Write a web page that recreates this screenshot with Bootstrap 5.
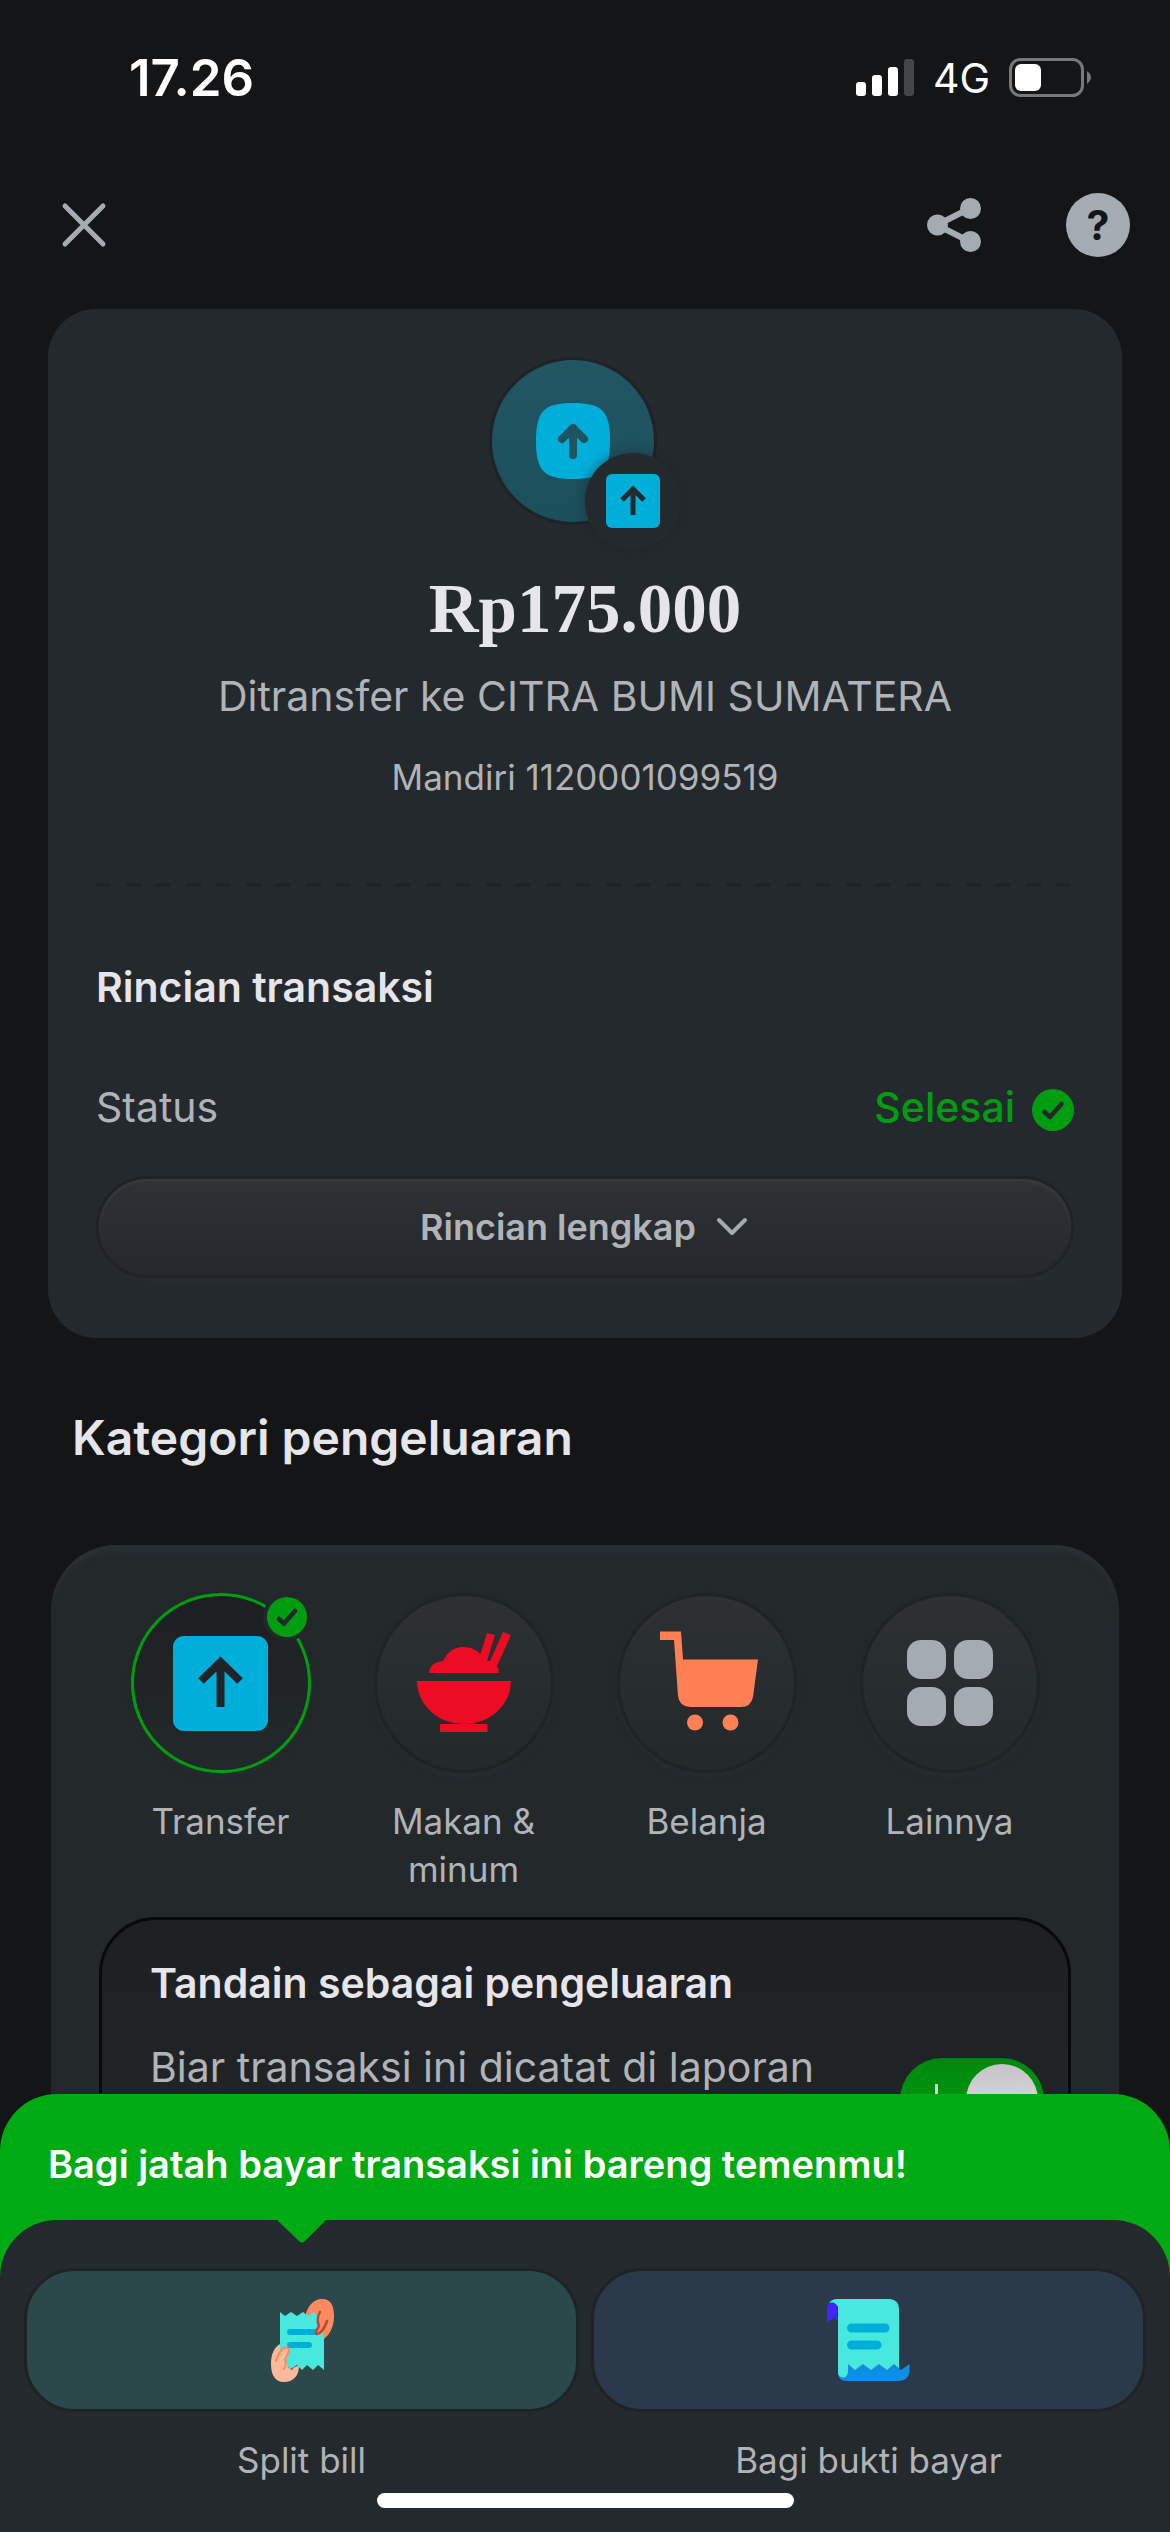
<!DOCTYPE html>
<html lang="id" data-bs-theme="dark">
<head>
<meta charset="utf-8">
<meta name="viewport" content="width=device-width, initial-scale=1">
<title>Rincian transaksi</title>
<link href="https://cdn.jsdelivr.net/npm/bootstrap@5.3.0/dist/css/bootstrap.min.css" rel="stylesheet">
<style>
  :root {
    --page: #131517; --panel: #24292d; --line: #1f2326;
    --bright: #e5e5ea; --soft: #b0b3b7; --steel: #a4abb3;
    --green: #009d10; --cyan: #00aeda;
  }
  body { background: var(--page); color: var(--soft); font-family: Inter, "Liberation Sans", sans-serif; line-height: 60px; font-size: 41px; }
  svg { display: block; flex: none; }
  button { background: none; border: 0; color: inherit; }
  h1, h2, p { margin: 0; line-height: 60px; }

  .statusbar { height: 156px; padding: 0 79px 0 129px; color: #fff; }
  .signals { gap: 19px; }
  .clock { font-size: 51px; font-weight: 600; }
  .topbar { height: 138px; padding: 0 40px 0 54px; }
  .topbar .actions { gap: 85px; }
  .help { width: 64px; height: 64px; border-radius: 50%; background: var(--steel); color: var(--page); font-size: 41px; font-weight: 700; line-height: 64px; }

  .receipt { background: var(--panel); border-radius: 48px; margin: 15px 48px 0; padding: 48px 48px 60px; }
  .avatar { width: 168px; height: 168px; margin-right: 24px; border: 3px solid var(--line); border-radius: 50%; background: linear-gradient(#225664, #1c4f5c); }
  .avatar-tag { position: absolute; right: -27px; bottom: -27px; width: 96px; height: 96px; border-radius: 50%; background: var(--panel); box-shadow: 0 0 12px rgba(32,34,38,.6); }
  .amount { font-family: "Liberation Serif", serif; font-weight: 700; font-size: 69px; line-height: 84px; color: var(--bright); margin-top: 42px; }
  .payee { margin-top: 15px; }
  .account { font-size: 35px; line-height: 48px; margin-top: 27px; }
  .dashes { height: 4px; margin: 82px 0 70px; background: repeating-linear-gradient(90deg, var(--line) 0 15px, transparent 15px 30px); }
  .section-title { font-size: 41px; font-weight: 600; color: var(--bright); }
  .state-row { margin-top: 60px; }
  .state { color: var(--green); font-weight: 500; gap: 17px; }
  .more { height: 102px; margin-top: 39px; border: 3px solid var(--line); border-radius: 51px; background: linear-gradient(#2e3235, #25292d); box-shadow: inset 0 3px 3px #383b3e, 0 6px 6px #272b2f; font-size: 36px; font-weight: 600; gap: 18px; }

  .category-title { font-size: 48px; font-weight: 600; color: var(--bright); margin: 70px 72px 0; }
  .categories { background: #23282b; border-radius: 66px 66px 0 0; margin: 77px 51px 0; padding: 48px; box-shadow: inset 0 9px 6px -3px #2b3033; }
  .cat { font-size: 35px; line-height: 48px; gap: 24px; min-height: 300px; }
  .disc { width: 180px; height: 180px; border-radius: 50%; border: 3px solid var(--line); background: linear-gradient(#2d3134, #23282b); box-shadow: 0 4px 6px #272b2e; }
  .disc.on { border-color: var(--green); background: linear-gradient(#1d2023, #23282b); }
  .disc-check { position: absolute; right: -3px; top: -3px; }
  .record { min-height: 366px; margin-top: 24px; padding: 33px 24px 33px 48px; border: 3px solid #08090a; border-radius: 57px; background: linear-gradient(#1d2023, #23282b); }
  .record p { margin-top: 24px; }
  .toggle.form-check-input { width: 144px; height: 84px; margin: 0; border: 0; border-radius: 42px; box-shadow: none; background: linear-gradient(#00880e, #009d10); }
  .toggle-box::before { content: ""; position: absolute; left: 35px; top: 26px; width: 3px; height: 30px; background: #d4d4d6; }
  .toggle-box::after { content: ""; position: absolute; right: 6px; top: 6px; width: 72px; height: 72px; border-radius: 50%; background: linear-gradient(#c4c4c8, #e5e5ea); }

  .sheet { background: #00aa13; border-radius: 57px 57px 0 0; }
  .promo { padding: 40px 48px 26px; font-size: 38px; font-weight: 600; color: #fff; }
  .sheet-body { background: var(--panel); border-radius: 57px 57px 0 0; padding: 48px 24px 24px; }
  .tiles { gap: 12px; }
  .action { color: var(--soft); font-size: 35px; line-height: 48px; gap: 24px; }
  .tile { height: 144px; border: 3px solid var(--line); border-radius: 51px; background: #2b484b; }
  .tile.blue { background: #2a3a4a; }
  .pointer { position: absolute; top: -49px; left: 50%; margin-left: -24px; }
  .home { width: 417px; height: 15px; border-radius: 8px; background: #fff; margin: 9px auto 0; }
</style>
</head>
<body>
<div class="statusbar d-flex align-items-center justify-content-between">
  <span class="clock">17.26</span>
  <div class="signals d-flex align-items-center">
    <svg width="58" height="38" viewBox="0 0 58 38" fill="#fff"><rect y="23" width="10" height="14" rx="3"/><rect x="16" y="16" width="10" height="21" rx="3"/><rect x="32" y="8" width="10" height="29" rx="3"/><rect x="48" width="10" height="37" rx="3" fill="#454648"/></svg>
    <span>4G</span>
    <svg width="82" height="40" viewBox="0 0 82 40"><rect x="1.500" y="1.500" width="72" height="36" rx="10" fill="none" stroke="#77787a" stroke-width="3"/><rect x="6" y="6" width="26" height="27" rx="6" fill="#fff"/><path d="M78 13q8 6 0 13z" fill="#77787a"/></svg>
  </div>
</div>

<header class="topbar d-flex align-items-center justify-content-between">
  <button class="p-0" aria-label="Tutup"><svg width="60" height="60" viewBox="0 0 60 60" stroke="#a4abb3" stroke-width="5" stroke-linecap="round"><path d="M11 11 49 49M49 11 11 49"/></svg></button>
  <div class="actions d-flex align-items-center">
    <button class="p-0" aria-label="Bagikan"><svg width="54" height="54" viewBox="0 0 54 54" fill="#a4abb3"><path d="M10 27 43.500 10M10 27 43.500 44" stroke="#a4abb3" stroke-width="6"/><circle cx="10.500" cy="27" r="10.500"/><circle cx="43.500" cy="10.500" r="10.500"/><circle cx="43.500" cy="43.500" r="10.500"/></svg></button>
    <button class="help p-0" aria-label="Bantuan">?</button>
  </div>
</header>

<main>
  <section class="receipt">
    <div class="text-center">
      <div class="avatar position-relative d-inline-flex align-items-center justify-content-center align-top">
        <svg width="74" height="76" viewBox="0 0 74 76"><path d="M37 0C66 0 74 8 74 38S66 76 37 76 0 68 0 38 8 0 37 0Z" fill="#00aeda"/><path d="M37 52V25M26 36 37 25 48 36" fill="none" stroke="#1f5361" stroke-width="8" stroke-linecap="round" stroke-linejoin="round"/></svg>
        <span class="avatar-tag d-flex align-items-center justify-content-center"><svg width="54" height="54" viewBox="0 0 54 54"><rect width="54" height="54" rx="6" fill="#00aeda"/><path d="M27 41V14M16 26 27 15 38 26" fill="none" stroke="#25292d" stroke-width="5"/></svg></span>
      </div>
      <h1 class="amount">Rp175.000</h1>
      <p class="payee">Ditransfer ke CITRA BUMI SUMATERA</p>
      <p class="account">Mandiri 1120001099519</p>
    </div>
    <div class="dashes"></div>
    <h2 class="section-title">Rincian transaksi</h2>
    <div class="state-row d-flex justify-content-between align-items-center">
      <span>Status</span>
      <span class="state d-flex align-items-center">Selesai
        <svg width="42" height="48" viewBox="0 0 42 48"><circle cx="21" cy="27" r="21" fill="#009d10"/><path d="M12.500 29 18 34 29.500 21" fill="none" stroke="#25292d" stroke-width="4.500" stroke-linecap="round" stroke-linejoin="round"/></svg>
      </span>
    </div>
    <button class="more w-100 d-flex align-items-center justify-content-center">Rincian lengkap
      <svg width="36" height="24" viewBox="0 0 36 24"><path d="M5 5 18 18 31 5" fill="none" stroke="#a4abb3" stroke-width="4" stroke-linecap="round" stroke-linejoin="round"/></svg>
    </button>
  </section>

  <h2 class="category-title">Kategori pengeluaran</h2>
  <section class="categories">
    <div class="row g-0">
      <button class="cat col-3 p-0 d-flex flex-column align-items-center">
        <span class="disc on position-relative d-flex align-items-center justify-content-center">
          <svg width="95" height="95" viewBox="0 0 95 95"><rect width="95" height="95" rx="11" fill="#00aeda"/><path d="M47.500 71V24M28 45 47.500 26 67 45" fill="none" stroke="#202427" stroke-width="8"/></svg>
          <svg class="disc-check" width="48" height="48" viewBox="0 0 48 48"><circle cx="24" cy="24" r="24" fill="#23282b"/><circle cx="24" cy="24" r="20" fill="#009d10"/><path d="M16 26 21 30.500 32 18" fill="none" stroke="#23282b" stroke-width="4.500" stroke-linecap="round" stroke-linejoin="round"/></svg>
        </span>
        <span>Transfer</span>
      </button>
      <button class="cat col-3 p-0 d-flex flex-column align-items-center">
        <span class="disc d-flex align-items-center justify-content-center">
          <svg width="104" height="104" viewBox="42 41 104 104" fill="#ec0c24"><path d="M47 91H141A47 43 0 0 1 47 91ZM70 134H117.500V142H70ZM59 83Q60 72 73 71 80 57 93 57 104 57 110.500 64L117 43 125 45 117 71H120L133 42 141 45 127 76Q129 79 129 83Z"/></svg>
        </span>
        <span>Makan &amp;<br>minum</span>
      </button>
      <button class="cat col-3 p-0 d-flex flex-column align-items-center">
        <span class="disc d-flex align-items-center justify-content-center">
          <svg width="104" height="104" viewBox="285 41 104 104" fill="#ff8055"><path d="M290 41.500H311L313 69.500H388L383 107Q381 117 371 117H320Q309 116 308 106L304 50H290Z"/><circle cx="325" cy="132.500" r="8"/><circle cx="360.500" cy="132.500" r="8"/></svg>
        </span>
        <span>Belanja</span>
      </button>
      <button class="cat col-3 p-0 d-flex flex-column align-items-center">
        <span class="disc d-flex align-items-center justify-content-center">
          <svg width="86" height="86" viewBox="0 0 86 86" fill="#a4abb3"><rect width="39" height="39" rx="14"/><rect x="47" width="39" height="39" rx="14"/><rect y="47" width="39" height="39" rx="14"/><rect x="47" y="47" width="39" height="39" rx="14"/></svg>
        </span>
        <span>Lainnya</span>
      </button>
    </div>
    <div class="record d-flex justify-content-between">
      <div>
        <h2 class="section-title"><label for="record-toggle">Tandain sebagai pengeluaran</label></h2>
        <p>Biar transaksi ini dicatat di laporan</p>
      </div>
      <div class="form-check form-switch p-0 m-0 d-flex align-self-center position-relative toggle-box">
        <input class="form-check-input toggle" type="checkbox" role="switch" id="record-toggle" checked>
      </div>
    </div>
  </section>
</main>

<aside class="sheet fixed-bottom">
  <p class="promo">Bagi jatah bayar transaksi ini bareng temenmu!</p>
  <div class="sheet-body">
    <div class="tiles d-flex">
      <button class="action flex-fill w-50 p-0 d-flex flex-column position-relative">
        <svg class="pointer" width="48" height="25" viewBox="0 0 48 25"><path d="M0 0H48V1L27 22Q24 25 21 22L0 2Z" fill="#00aa13"/></svg>
        <span class="tile w-100 d-flex align-items-center justify-content-center">
          <svg width="64" height="84" viewBox="14 47 64 84"><path d="M49 66C51 56 57 48 66 48 75 48 78 55 78 65 78 76 74 83 67 88L60 70Z" fill="#ff8a60"/><path d="M24 61 29 65 35 61 41 65 47 61 52 65 57 61 62 65 68 72V119L62 114 57 119 51 114 46 119 41 114 35 118 30 114 24 118Z" fill="#48e8df"/><path d="M34 81H58M34 94H53" stroke="#00aeda" stroke-width="6" stroke-linecap="round"/><path d="M62 62 68 88Q78 80 76 66Z" fill="#ff8a60"/><path d="M64 61Q60 68 63 75 58 83 61 83 67 82 71 70" fill="#ff8a60" stroke="#b84a35" stroke-width="2.500" stroke-linecap="round"/><path d="M24 93C17 97 15 105 15 113 15 125 20 131 28 131 37 131 43 125 43 115Q38 115 36 119 30 116 29 108L24 100Z" fill="#ffb99a"/><path d="M20 110Q23 99 30 96 36 97 29 108 31 113 28 118" fill="#ffb99a" stroke="#ff8a60" stroke-width="2" stroke-linecap="round"/></svg>
        </span>
        <span class="w-100 text-center">Split bill</span>
      </button>
      <button class="action flex-fill w-50 p-0 d-flex flex-column">
        <span class="tile blue w-100 d-flex align-items-center justify-content-center">
          <svg width="83" height="83" viewBox="17 28 83 83"><path d="M27 28H80Q89 29 89 38V104H28V36Q25 30 19 32 22 28 27 28Z" fill="#48e8df"/><path d="M38 93 45 99 53 93 61 99 69 93 77 99 84 93 91 99 99.500 93V101Q98 110 88 110H36Q29 110 28 103Z" fill="#108de5"/><path d="M28 92H38V101Q37 106.500 33 106.500 28 106.500 28 100Z" fill="#48e8df"/><path d="M17 52V38Q17 32 22 32 27 32 27.500 38V50L24.500 46Z" fill="#4324ff"/><path d="M41.500 57H75M41.500 74H67" stroke="#00aeda" stroke-width="9" stroke-linecap="round"/></svg>
        </span>
        <span class="w-100 text-center">Bagi bukti bayar</span>
      </button>
    </div>
    <div class="home"></div>
  </div>
</aside>
<script src="https://cdn.jsdelivr.net/npm/bootstrap@5.3.0/dist/js/bootstrap.bundle.min.js"></script>
</body>
</html>
